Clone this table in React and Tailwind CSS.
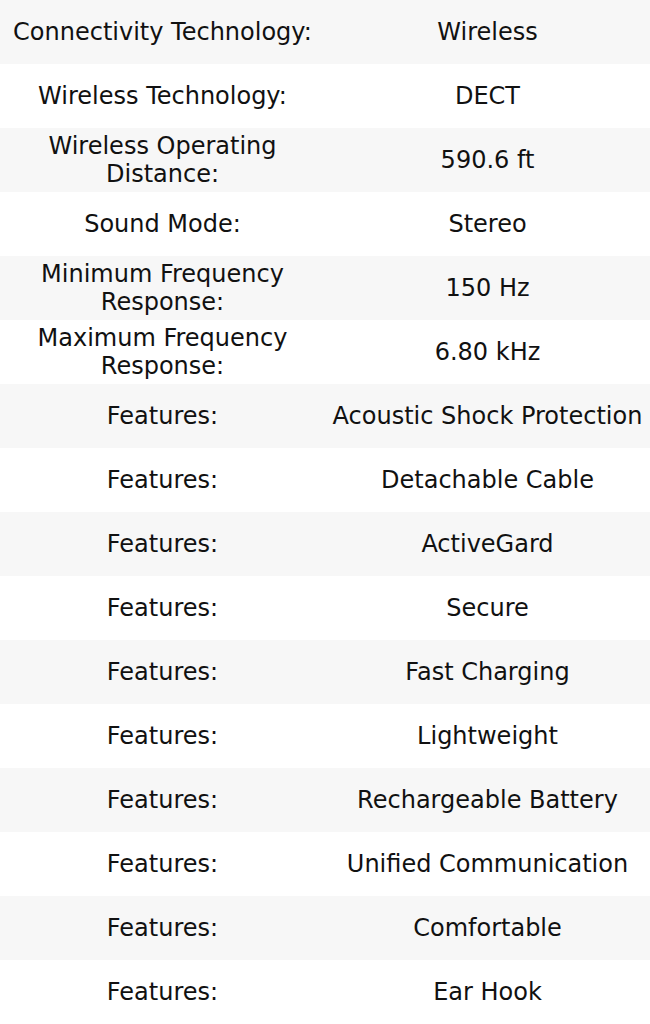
const specs = [
    ["Connectivity Technology:", "Wireless"],
    ["Wireless Technology:", "DECT"],
    ["Wireless Operating Distance:", "590.6 ft"],
    ["Sound Mode:", "Stereo"],
    ["Minimum Frequency Response:", "150 Hz"],
    ["Maximum Frequency Response:", "6.80 kHz"],
    ["Features:", "Acoustic Shock Protection"],
    ["Features:", "Detachable Cable"],
    ["Features:", "ActiveGard"],
    ["Features:", "Secure"],
    ["Features:", "Fast Charging"],
    ["Features:", "Lightweight"],
    ["Features:", "Rechargeable Battery"],
    ["Features:", "Unified Communication"],
    ["Features:", "Comfortable"],
    ["Features:", "Ear Hook"],
];

const App = () => {
    return (
        <div className="w-[650px] bg-white font-['DejaVu_Sans',sans-serif] text-[#111] text-[24px]">
            <table className="w-full table-fixed border-collapse">
                <tbody>
                    {specs.map(([label, value], i) => (
                        <tr key={i} className={i % 2 === 0 ? "bg-[#f7f7f7]" : "bg-white"}>
                            <td className="h-16 px-1 text-center align-middle leading-7">{label}</td>
                            <td className="h-16 px-1 text-center align-middle leading-7">{value}</td>
                        </tr>
                    ))}
                </tbody>
            </table>
        </div>
    );
};

export default App;
